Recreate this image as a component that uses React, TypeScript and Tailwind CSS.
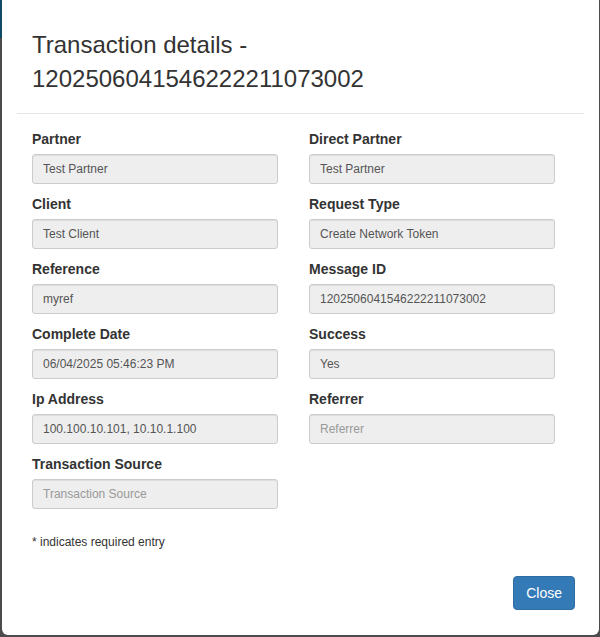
import React from "react";

type Field = {
  label: string;
  value?: string;
  placeholder?: string;
};

const fields: Field[] = [
  { label: "Partner", value: "Test Partner" },
  { label: "Direct Partner", value: "Test Partner" },
  { label: "Client", value: "Test Client" },
  { label: "Request Type", value: "Create Network Token" },
  { label: "Reference", value: "myref" },
  { label: "Message ID", value: "1202506041546222211073002" },
  { label: "Complete Date", value: "06/04/2025 05:46:23 PM" },
  { label: "Success", value: "Yes" },
  { label: "Ip Address", value: "100.100.10.101, 10.10.1.100" },
  { label: "Referrer", placeholder: "Referrer" },
  { label: "Transaction Source", placeholder: "Transaction Source" },
];

function FormField({ field }: { field: Field }) {
  return (
    <div className="mb-[10px]">
      <label className="block text-[14px] leading-[20px] font-bold text-[#333] mb-[5px]">
        {field.label}
      </label>
      <input
        type="text"
        readOnly
        disabled
        value={field.value ?? ""}
        placeholder={field.placeholder}
        className="block w-full h-[30px] px-[10px] text-[12px] leading-[18px] text-[#555] placeholder:text-[#999] bg-[#eeeeee] border border-[#cccccc] rounded-[3px] shadow-[inset_0_1px_1px_rgba(0,0,0,0.075)] opacity-100"
      />
    </div>
  );
}

export default function App() {
  return (
    <div className="relative min-h-[637px] bg-[#4b4b4b] font-['Liberation_Sans',Arial,sans-serif]">
      {/* backdrop peeking through on the left */}
      <div className="absolute left-0 top-0 w-[2px] h-[38px] bg-[#0d4a63]" />

      <div className="ml-[2px] w-[597px] bg-white rounded-b-[6px] pb-[25px]">
        <div className="mx-[15px] px-[15px] pt-[28px] pb-[17px] border-b border-[#e5e5e5]">
          <h4 className="text-[24px] leading-[34px] font-normal text-[#333]">
            Transaction details -
            <br />
            1202506041546222211073002
          </h4>
        </div>

        <div className="px-[30px] pt-[15px]">
          <div className="grid grid-cols-[246px_246px] gap-x-[31px]">
            {fields.map((f) => (
              <FormField key={f.label} field={f} />
            ))}
          </div>

          <p className="mt-[15px] text-[12px] leading-[17px] text-[#333]">
            * indicates required entry
          </p>
        </div>

        <div className="flex justify-end pr-[24px] mt-[25px]">
          <button
            type="button"
            className="h-[34px] px-[12px] text-[14px] leading-[20px] text-white bg-[#337ab7] border border-[#2e6da4] rounded-[4px] hover:bg-[#286090]"
          >
            Close
          </button>
        </div>
      </div>
    </div>
  );
}
